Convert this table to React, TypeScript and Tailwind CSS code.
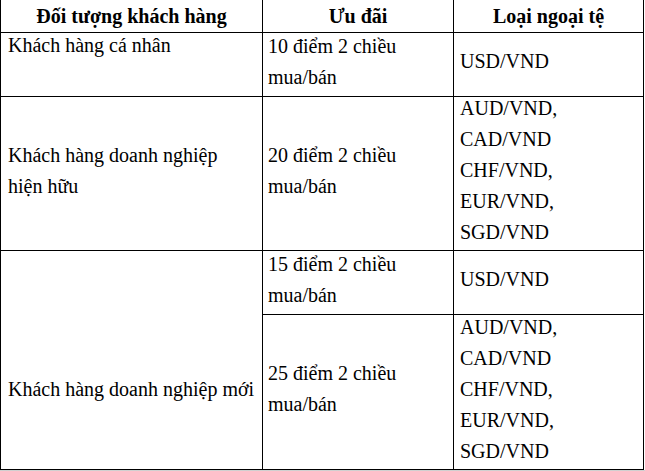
import React from "react";

function Lines({ items }: { items: string[] }) {
  return (
    <div className="-translate-y-[3px]">
      {items.map((t, i) => (
        <div key={i} className="whitespace-nowrap">
          {t}
        </div>
      ))}
    </div>
  );
}

export default function App() {
  const cell = "border-r border-b border-black flex flex-col";
  return (
    <div className="w-[645px] h-[471px] bg-white text-black font-['Liberation_Serif','Times_New_Roman',serif]">
      <div className="grid w-[644px] border-l border-black grid-cols-[262px_191px_190px] grid-rows-[33px_64px_154px_64px_155px] text-[20px] leading-[31px]">
        {/* header */}
        <div className={`${cell} justify-center items-center font-bold`}>Đối tượng khách hàng</div>
        <div className={`${cell} justify-center items-center font-bold`}>Ưu đãi</div>
        <div className={`${cell} justify-center items-center font-bold`}>Loại ngoại tệ</div>

        {/* row 1 */}
        <div className={`${cell} justify-start pl-[7px]`}>
          <Lines items={["Khách hàng cá nhân"]} />
        </div>
        <div className={`${cell} justify-center pl-[5px]`}>
          <Lines items={["10 điểm 2 chiều", "mua/bán"]} />
        </div>
        <div className={`${cell} justify-center pl-[6px]`}>
          <Lines items={["USD/VND"]} />
        </div>

        {/* row 2 */}
        <div className={`${cell} justify-center pl-[7px]`}>
          <Lines items={["Khách hàng doanh nghiệp", "hiện hữu"]} />
        </div>
        <div className={`${cell} justify-center pl-[5px]`}>
          <Lines items={["20 điểm 2 chiều", "mua/bán"]} />
        </div>
        <div className={`${cell} justify-center pl-[6px]`}>
          <Lines items={["AUD/VND,", "CAD/VND", "CHF/VND,", "EUR/VND,", "SGD/VND"]} />
        </div>

        {/* row 3 */}
        <div className={`${cell} row-span-2 justify-center pl-[7px] pt-[64px]`}>
          <Lines items={["Khách hàng doanh nghiệp mới"]} />
        </div>
        <div className={`${cell} justify-center pl-[5px]`}>
          <Lines items={["15 điểm 2 chiều", "mua/bán"]} />
        </div>
        <div className={`${cell} justify-center pl-[6px]`}>
          <Lines items={["USD/VND"]} />
        </div>

        <div className={`${cell} justify-center pl-[5px]`}>
          <Lines items={["25 điểm 2 chiều", "mua/bán"]} />
        </div>
        <div className={`${cell} justify-center pl-[6px]`}>
          <Lines items={["AUD/VND,", "CAD/VND", "CHF/VND,", "EUR/VND,", "SGD/VND"]} />
        </div>
      </div>
      <div className="h-[1px] w-[645px] bg-[#d0d0d0]" />
    </div>
  );
}
